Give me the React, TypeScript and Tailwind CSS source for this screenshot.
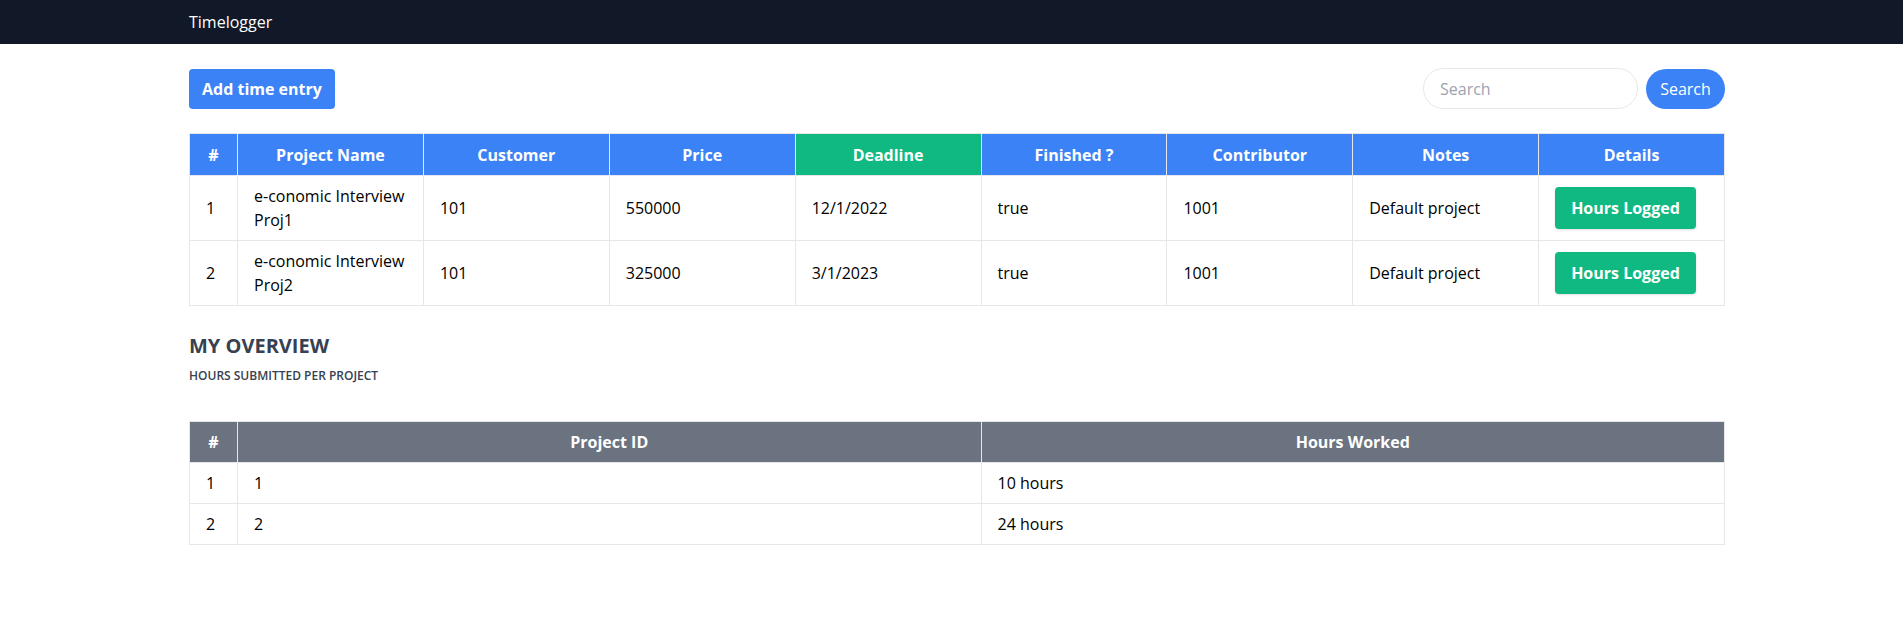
import React from 'react';

const projects = [
  { id: 1, name: 'e-conomic Interview Proj1', customer: 101, price: 550000, deadline: '12/1/2022', finished: 'true', contributor: 1001, notes: 'Default project' },
  { id: 2, name: 'e-conomic Interview Proj2', customer: 101, price: 325000, deadline: '3/1/2023', finished: 'true', contributor: 1001, notes: 'Default project' },
];

const overview = [
  { id: 1, projectId: 1, hours: '10 hours' },
  { id: 2, projectId: 2, hours: '24 hours' },
];

const headers = ['Project Name', 'Customer', 'Price', 'Deadline', 'Finished ?', 'Contributor', 'Notes', 'Details'];

export default function App() {
  return (
    <div className="min-h-screen bg-white text-black font-['Open_Sans',sans-serif]">
      <nav className="h-11 bg-[#111827] flex items-center">
        <div className="ml-[189px] text-white text-base">Timelogger</div>
      </nav>

      <main className="ml-[189px] w-[1536px] pt-6">
        <div className="flex items-center justify-between">
          <button className="h-10 px-[13px] rounded bg-[#3b82f6] text-white font-bold">Add time entry</button>
          <div className="flex items-center gap-2">
            <input
              placeholder="Search"
              className="w-[215px] h-[41px] px-4 rounded-full border border-[#e5e7eb] placeholder-[#9ca3af] outline-none"
            />
            <button className="h-10 w-[79px] rounded-full bg-[#3b82f6] text-white">Search</button>
          </div>
        </div>

        <table className="mt-6 w-full table-fixed border-collapse border border-[#e5e7eb]">
          <colgroup>
            <col className="w-[48px]" />
            {headers.map((h) => (
              <col key={h} />
            ))}
          </colgroup>
          <thead>
            <tr className="text-white font-bold">
              <th className="h-[42px] px-4 border border-[#e5e7eb] bg-[#3b82f6]">#</th>
              {headers.map((h) => (
                <th
                  key={h}
                  className={`h-[42px] px-4 border border-[#e5e7eb] ${h === 'Deadline' ? 'bg-[#10b981]' : 'bg-[#3b82f6]'}`}
                >
                  {h}
                </th>
              ))}
            </tr>
          </thead>
          <tbody>
            {projects.map((p) => (
              <tr key={p.id}>
                <td className="px-4 py-2 border border-[#e5e7eb]">{p.id}</td>
                <td className="px-4 py-2 border border-[#e5e7eb]">{p.name}</td>
                <td className="px-4 py-2 border border-[#e5e7eb]">{p.customer}</td>
                <td className="px-4 py-2 border border-[#e5e7eb]">{p.price}</td>
                <td className="px-4 py-2 border border-[#e5e7eb]">{p.deadline}</td>
                <td className="px-4 py-2 border border-[#e5e7eb]">{p.finished}</td>
                <td className="px-4 py-2 border border-[#e5e7eb]">{p.contributor}</td>
                <td className="px-4 py-2 border border-[#e5e7eb]">{p.notes}</td>
                <td className="px-4 py-2 border border-[#e5e7eb]">
                  <button className="h-[42px] px-4 rounded bg-[#10b981] text-white font-bold shadow-sm">Hours Logged</button>
                </td>
              </tr>
            ))}
          </tbody>
        </table>

        <h2 className="mt-[26px] text-xl font-bold text-[#374151]">MY OVERVIEW</h2>
        <h3 className="mt-2 text-xs font-semibold text-[#374151]">HOURS SUBMITTED PER PROJECT</h3>

        <table className="mt-[37px] w-full table-fixed border-collapse border border-[#e5e7eb]">
          <colgroup>
            <col className="w-[48px]" />
            <col />
            <col />
          </colgroup>
          <thead>
            <tr className="text-white font-bold bg-[#6b7280]">
              <th className="h-[41px] px-4 border border-[#e5e7eb]">#</th>
              <th className="h-[41px] px-4 border border-[#e5e7eb]">Project ID</th>
              <th className="h-[41px] px-4 border border-[#e5e7eb]">Hours Worked</th>
            </tr>
          </thead>
          <tbody>
            {overview.map((o) => (
              <tr key={o.id}>
                <td className="h-[41px] px-4 border border-[#e5e7eb]">{o.id}</td>
                <td className="h-[41px] px-4 border border-[#e5e7eb]">{o.projectId}</td>
                <td className="h-[41px] px-4 border border-[#e5e7eb]">{o.hours}</td>
              </tr>
            ))}
          </tbody>
        </table>
      </main>
    </div>
  );
}
